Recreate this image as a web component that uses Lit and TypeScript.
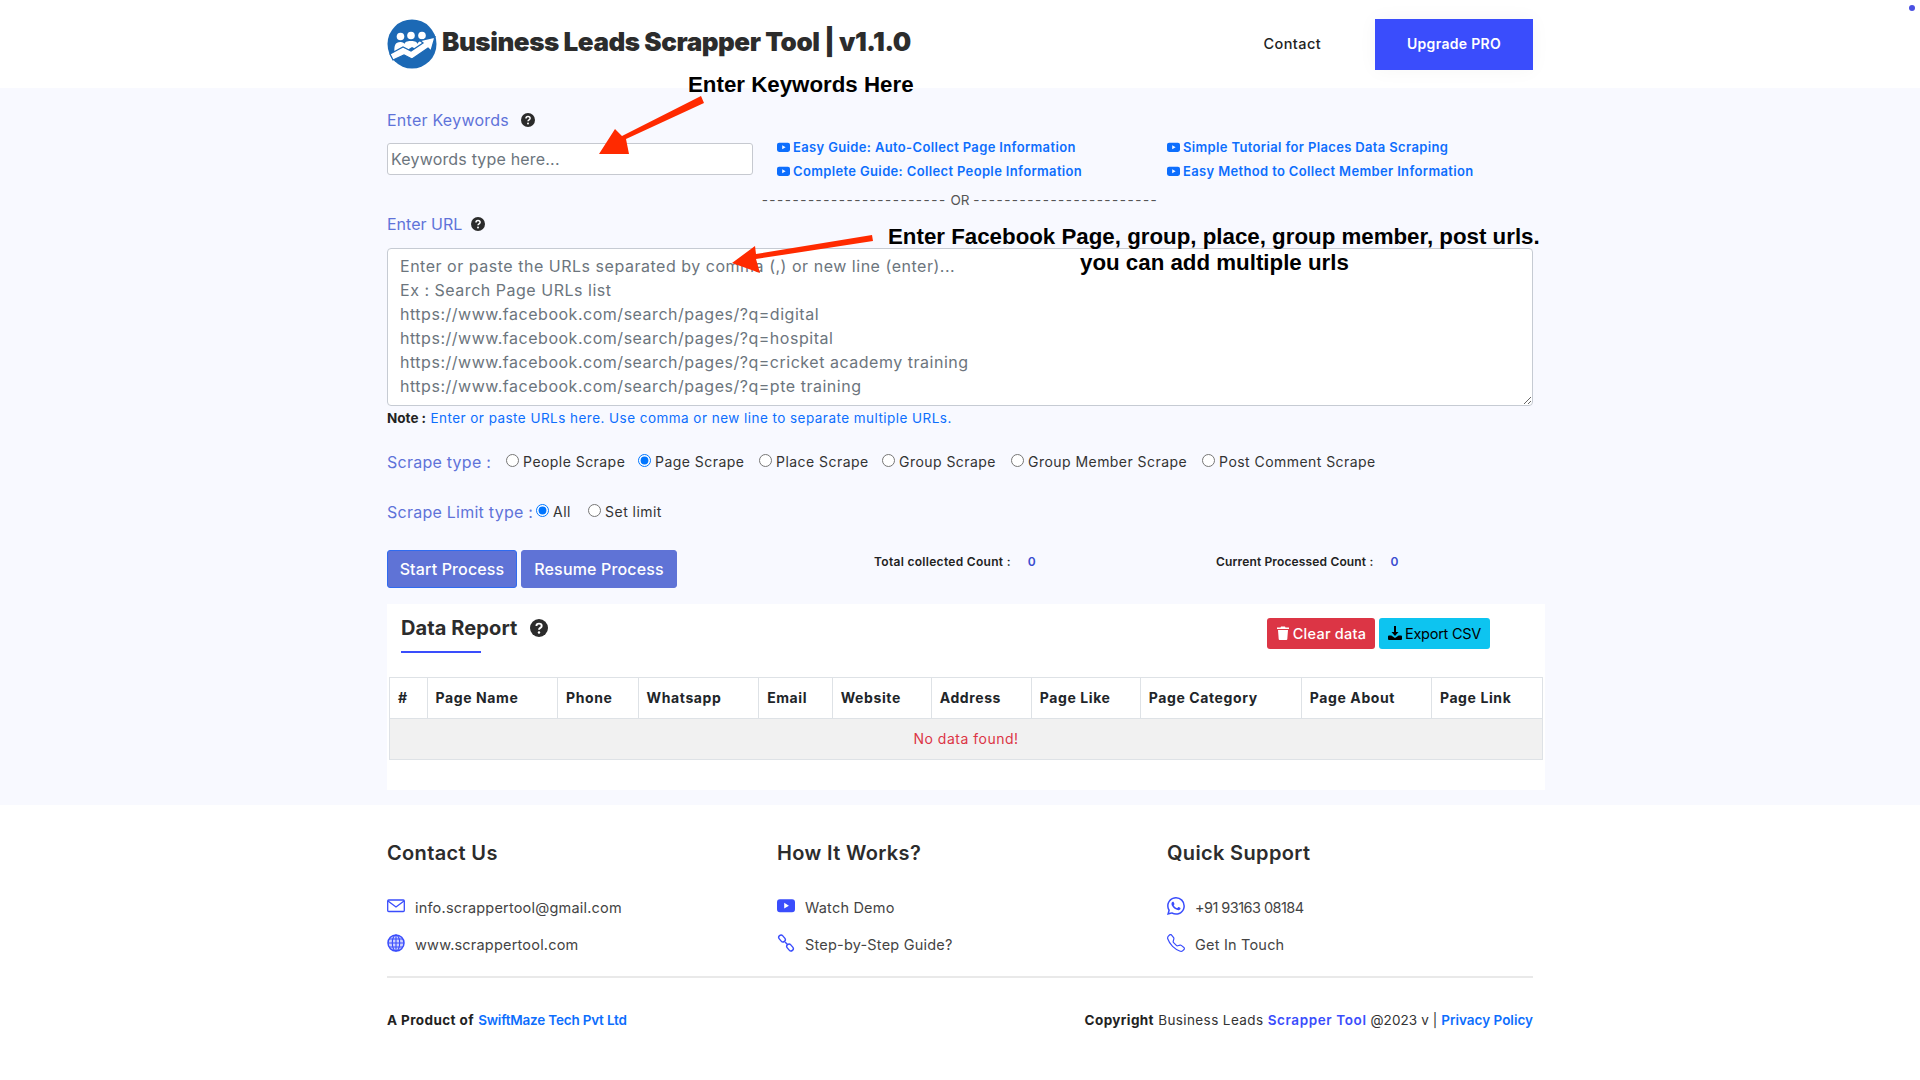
import { LitElement, html, css, svg } from "lit";
import { customElement } from "lit/decorators.js";

const yt = (cls: string) => html`<svg class=${cls} viewBox="0 0 16 16" fill="currentColor"><path fill-rule="evenodd" d="M2.6 2h10.8A2.6 2.6 0 0 1 16 4.6v6.3a2.6 2.6 0 0 1-2.6 2.6H2.6A2.6 2.6 0 0 1 0 10.900V4.600A2.6 2.6 0 0 1 2.600 2zM6.400 5.200v5l4.200-2.500z"/></svg>`;
const help = (size: number) => html`<svg style="width:${size}px;height:${size}px" class="help" viewBox="0 0 16 16"><circle cx="8" cy="8" r="8" fill="#2b2b2b"/><path d="M5.700 6.200C5.700 4.900 6.700 4.100 8 4.100s2.400.8 2.400 2.100c0 1.700-2.400 1.700-2.400 3.300" fill="none" stroke="#fff" stroke-width="1.700"/><circle cx="8" cy="11.900" r="1.100" fill="#fff"/></svg>`;

const columns = [
  ["#", 37.5], ["Page Name", 130.5], ["Phone", 80.5], ["Whatsapp", 120.5], ["Email", 73.5], ["Website", 99],
  ["Address", 100], ["Page Like", 109], ["Page Category", 161], ["Page About", 130], ["Page Link", 111],
] as [string, number][];

const scrapeTypes = ["People Scrape", "Page Scrape", "Place Scrape", "Group Scrape", "Group Member Scrape", "Post Comment Scrape"];
const placeholder = `Enter or paste the URLs separated by comma (,) or new line (enter)...
Ex : Search Page URLs list
https://www.facebook.com/search/pages/?q=digital
https://www.facebook.com/search/pages/?q=hospital
https://www.facebook.com/search/pages/?q=cricket academy training
https://www.facebook.com/search/pages/?q=pte training`;
const dashes = "------------------------";

@customElement("app-root")
export class AppRoot extends LitElement {
  static styles = css`
    :host { display: block; position: relative; height: 1080px; overflow: hidden; background: #fff; font-family: Inter, "Noto Sans", sans-serif; color: #333; }
    * { box-sizing: border-box; }
    a { text-decoration: none; }
    .wrap { width: 1146px; margin: 0 auto; }
    header .wrap { height: 88px; display: flex; align-items: center; }
    .logo { width: 50px; height: 50px; flex: none; }
    .brand { margin: -5px 0 0 5px; font-size: 26px; font-weight: 900; letter-spacing: -0.45px; color: #2c2c2c; white-space: nowrap; }
    .contact { margin-left: auto; margin-right: 54px; font-size: 14.500px; font-weight: 500; color: #222; margin-top: -1px; letter-spacing: .4px; }
    .pro { width: 158px; height: 51px; background: #3a4dfc; color: #fff; font-size: 14px; font-weight: 600; letter-spacing: .3px; padding-bottom: 1px; display: flex; align-items: center; justify-content: center; box-shadow: 0 0 20px rgba(0,0,0,.04); }
    .dot { position: absolute; left: 1909px; top: 5px; width: 6px; height: 6px; border-radius: 50%; background: #4a50e2; }

    main { background: #f8f9ff; height: 717px; padding-top: 20px; }
    .label { font-size: 16px; line-height: 24px; color: #5f73d9; display: flex; align-items: center; gap: 12px; letter-spacing: .25px; }
    .help { flex: none; }
    .top { display: grid; grid-template-columns: 390px 390px 366px; }
    .kw { margin-top: 11px; width: 366px; height: 32px; border: 1px solid #c6c9d0; border-radius: 3px; background: #fff; padding: 0 3px; font: 400 16px Inter, sans-serif; letter-spacing: .18px; display: block; outline: none; }
    .kw::placeholder { color: #6c757d; opacity: 1; }
    .links { margin-top: 29px; display: flex; flex-direction: column; gap: 4px; }
    .links a { height: 20px; display: flex; align-items: center; gap: 3px; font-size: 13px; font-weight: 600; color: #0d6efd; letter-spacing: .35px; white-space: nowrap; }
    .yt { width: 13px; height: 13px; flex: none; }
    .or { margin-top: 9px; height: 20px; line-height: 20px; text-align: center; font-size: 13.500px; color: #555; white-space: nowrap; }
    .or span { letter-spacing: 1.500px; }
    .urllabel { margin-top: 2px; letter-spacing: 0; }
    .label.urllabel { gap: 9px; }
    textarea { display: block; margin-top: 12px; width: 1146px; height: 158px; border: 1px solid #c6cbd3; border-radius: 4px; background: #fff; padding: 5px 12px; font: 400 16px/24px Inter, sans-serif; letter-spacing: .52px; outline: none; overflow: hidden; }
    textarea::placeholder { color: #6c757d; opacity: 1; }
    .note { margin-top: 2px; height: 20px; line-height: 20px; font-size: 13.500px; color: #0d6efd; white-space: nowrap; letter-spacing: .46px; }
    .note b { color: #222; font-weight: 700; letter-spacing: 0; }
    .row { height: 24px; display: flex; align-items: center; white-space: nowrap; }
    .types { margin-top: 22px; }
    .limit { margin-top: 26px; }
    .opt { display: flex; align-items: center; font-size: 14px; color: #333; letter-spacing: .45px; padding-bottom: 2px; }
    .opt input { width: 13px; height: 13px; margin: -1px 4px 0 0; }
    .types .opts { display: grid; grid-template-columns: 132px 121px 123px 129px 191px auto; margin-left: 15px; }
    .limit .opts { display: grid; grid-template-columns: 52px auto; margin-left: 3px; }
    .actions { margin-top: 26px; height: 38px; display: grid; grid-template-columns: 487px 342px auto; }
    .btns { display: flex; gap: 4px; }
    .btn { height: 38px; border-radius: 3px; border: 1px solid #5f73d6; background: #5f73d6; color: #fff; font-size: 16px; font-weight: 500; letter-spacing: .15px; padding-bottom: 1px; display: flex; align-items: center; justify-content: center; }
    .btn.start { width: 130px; border-color: #2f6bf0; }
    .btn.resume { width: 156px; }
    .count { margin-top: 3px; height: 18px; display: flex; font-size: 12px; font-weight: 600; color: #222; line-height: 18px; white-space: nowrap; letter-spacing: .3px; }
    .count.b { letter-spacing: .15px; }
    .count span { color: #3a4dd0; margin-left: 17px; }

    .panel { margin-top: 16px; width: 1158px; height: 186px; background: #fff; }
    .phead { height: 73px; display: flex; padding-left: 14px; }
    .ptitle { display: flex; align-items: flex-start; flex-direction: column; }
    .ptitle h2 { margin: 10px 0 0; font-size: 20px; line-height: 28px; font-weight: 700; color: #2c2c2c; display: flex; align-items: center; gap: 13px; letter-spacing: .1px; }
    .ptitle i { display: block; flex: none; margin-top: 9px; width: 80px; height: 2px; background: #3a4dfc; }
    .pbtns { margin: 14px 55px 0 auto; display: flex; gap: 4px; }
    .small { height: 31px; border-radius: 3px; font-size: 14.500px; padding-bottom: 1px; display: flex; align-items: center; justify-content: center; gap: 3px; }
    .small svg { width: 14px; height: 14px; }
    .clear { width: 108px; background: #dc3545; color: #fff; font-weight: 500; letter-spacing: .25px; }
    .export { width: 111px; background: #0dc4f0; color: #000; letter-spacing: -.25px; }
    table { margin-left: 2px; width: 1154px; table-layout: fixed; border-collapse: collapse; }
    th, td { border: 1px solid #dee2e6; }
    th { height: 41px; text-align: left; padding: 0 8px 1px; font-size: 14px; font-weight: 700; color: #212529; white-space: nowrap; letter-spacing: .6px; }
    td { height: 41px; padding: 0 0 2px; text-align: center; background: #f1f1f1; color: #dc3545; font-size: 14px; letter-spacing: .5px; }

    footer .grid { display: grid; grid-template-columns: 390px 390px 366px; padding-top: 33px; }
    footer h3 { margin: 0 0 27px; height: 30px; line-height: 30px; font-size: 20px; font-weight: 600; color: #2c2c2c; letter-spacing: .35px; }
    .item { height: 24px; display: flex; align-items: center; gap: 10px; font-size: 14.500px; color: #444; margin-bottom: 13px; white-space: nowrap; letter-spacing: .2px; }
    .item.tel { letter-spacing: -.55px; }
    .item svg { width: 18px; height: 18px; flex: none; color: #3a4dfc; margin-top: -3px; }
    hr { margin: 7px 0 0; border: 0; height: 2px; background: #e9e9e9; }
    .bottom { margin-top: 32px; height: 20px; display: flex; justify-content: space-between; align-items: center; font-size: 13.500px; color: #333; white-space: nowrap; letter-spacing: .4px; }
    .bottom b { font-weight: 700; color: #222; }
    .bottom a { font-weight: 600; color: #0d6efd; letter-spacing: 0; }
    .bottom a.swift { letter-spacing: -.2px; }
    .bottom a.indigo { color: #3a4dfc; letter-spacing: .6px; }
    .bottom .year { letter-spacing: .1px; }

    .overlay { position: absolute; left: 0; top: 0; width: 1920px; height: 1080px; pointer-events: none; }
    .note-a { position: absolute; font-family: "Liberation Sans", Arial, sans-serif; font-weight: 700; font-size: 22.300px; line-height: 26px; color: #000; white-space: nowrap; }
  `;

  render() {
    return html`
      <header><div class="wrap">
        <svg class="logo" viewBox="0 0 50 50">
          <circle cx="25" cy="25" r="24.500" fill="#1c69b5"/>
          <g fill="#fff">
            <circle cx="13.500" cy="17.500" r="3.800"/><circle cx="24" cy="16.500" r="3.800"/><circle cx="35" cy="16.500" r="3.800"/>
            <path d="M7.500 33c-.5-6 .5-10 6-10 2.500 0 3.500 1 4 2 .5-2 2-3 6.500-3s6 1 6.500 3c.5-2 2-3 5-3 3.500 0 4.500 1.500 4.500 3l-9 6-6-3-8 5-2-1z"/>
            <path d="M3 35l13-7 8 4 12-8-3-2.500 15-3.500-4 14-3-3-16 11-8-4-11 5z" stroke="#1c69b5" stroke-width="1.300"/>
          </g>
        </svg>
        <div class="brand">Business Leads Scrapper Tool | v1.1.0</div>
        <a class="contact">Contact</a>
        <a class="pro">Upgrade PRO</a>
      </div></header>
      <div class="dot"></div>

      <main><div class="wrap">
        <div class="top">
          <div>
            <div class="label">Enter Keywords ${help(14)}</div>
            <input class="kw" placeholder="Keywords type here..." />
          </div>
          <div class="links">
            <a>${yt("yt")}Easy Guide: Auto-Collect Page Information</a>
            <a>${yt("yt")}Complete Guide: Collect People Information</a>
          </div>
          <div class="links">
            <a>${yt("yt")}Simple Tutorial for Places Data Scraping</a>
            <a>${yt("yt")}Easy Method to Collect Member Information</a>
          </div>
        </div>
        <div class="or"><span>${dashes}</span> OR <span>${dashes}</span></div>
        <div class="label urllabel">Enter URL ${help(14)}</div>
        <textarea placeholder=${placeholder}></textarea>
        <div class="note"><b>Note :</b> Enter or paste URLs here. Use comma or new line to separate multiple URLs.</div>
        <div class="row types">
          <div class="label">Scrape type :</div>
          <div class="opts">
            ${scrapeTypes.map((t) => html`<label class="opt"><input type="radio" name="st" ?checked=${t === "Page Scrape"} />${t}</label>`)}
          </div>
        </div>
        <div class="row limit">
          <div class="label">Scrape Limit type :</div>
          <div class="opts">
            <label class="opt"><input type="radio" name="lt" checked />All</label>
            <label class="opt"><input type="radio" name="lt" />Set limit</label>
          </div>
        </div>
        <div class="actions">
          <div class="btns"><div class="btn start">Start Process</div><div class="btn resume">Resume Process</div></div>
          <div class="count a">Total collected Count :<span>0</span></div>
          <div class="count b">Current Processed Count :<span>0</span></div>
        </div>
        <div class="panel">
          <div class="phead">
            <div class="ptitle"><h2>Data Report ${help(18)}</h2><i></i></div>
            <div class="pbtns">
              <div class="small clear"><svg viewBox="0 0 14 14" fill="currentColor"><path d="M5 .5h4l.5 1H13v1.500H1V1.500h3.500zM2 4h10l-.7 9a1 1 0 0 1-1 1H3.700a1 1 0 0 1-1-1z"/></svg>Clear data</div>
              <div class="small export"><svg viewBox="0 0 14 14" fill="currentColor"><path d="M6 0h2v6h2.500L7 10 3.500 6H6z"/><path d="M0 10.500a1 1 0 0 1 1-1h2.300L7 12l3.700-2.500H13a1 1 0 0 1 1 1V13a1 1 0 0 1-1 1H1a1 1 0 0 1-1-1z"/></svg>Export CSV</div>
            </div>
          </div>
          <table>
            <colgroup>${columns.map(([, w]) => html`<col style="width:${w}px" />`)}</colgroup>
            <thead><tr>${columns.map(([n]) => html`<th>${n}</th>`)}</tr></thead>
            <tbody><tr><td colspan="11">No data found!</td></tr></tbody>
          </table>
        </div>
      </div></main>

      <footer><div class="wrap">
        <div class="grid">
          <div>
            <h3>Contact Us</h3>
            <div class="item"><svg viewBox="0 0 18 18" fill="none" stroke="currentColor" stroke-width="1.300"><rect x=".7" y="3" width="16.600" height="11.500" rx="1"/><path d="M1 4l8 6 8-6"/></svg>info.scrappertool@gmail.com</div>
            <div class="item"><svg viewBox="0 0 18 18" fill="none" stroke="currentColor" stroke-width="1.100"><circle cx="9" cy="9" r="8" fill="currentColor" fill-opacity=".25" stroke-width="1.500"/><ellipse cx="9" cy="9" rx="3.700" ry="8"/><path d="M9 1v16M1 9h16M2 5h14M2 13h14"/></svg>www.scrappertool.com</div>
          </div>
          <div>
            <h3>How It Works?</h3>
            <div class="item">${yt("")}Watch Demo</div>
            <div class="item"><svg viewBox="0 0 18 18" fill="none" stroke="currentColor" stroke-width="1.400"><rect x="-3.800" y="-2.300" width="7.600" height="4.600" rx="2.300" transform="translate(5 4.500) rotate(50)"/><rect x="-3.800" y="-2.300" width="7.600" height="4.600" rx="2.300" transform="translate(13 13.500) rotate(50)"/><path d="M8 8l2.500 2.500"/></svg>Step-by-Step Guide?</div>
          </div>
          <div>
            <h3>Quick Support</h3>
            <div class="item tel"><svg viewBox="0 0 16 16" fill="currentColor"><path d="M13.601 2.326A7.854 7.854 0 0 0 7.994 0C3.627 0 .068 3.558.064 7.926c0 1.399.366 2.76 1.057 3.965L0 16l4.204-1.102a7.933 7.933 0 0 0 3.79.965h.004c4.368 0 7.926-3.558 7.93-7.93A7.898 7.898 0 0 0 13.6 2.326zM7.994 14.521a6.573 6.573 0 0 1-3.356-.92l-.24-.144-2.494.654.666-2.433-.156-.251a6.56 6.56 0 0 1-1.007-3.505c0-3.626 2.957-6.584 6.591-6.584a6.56 6.56 0 0 1 4.66 1.931 6.557 6.557 0 0 1 1.928 4.66c-.004 3.639-2.961 6.592-6.592 6.592zm3.615-4.934c-.197-.099-1.17-.578-1.353-.646-.182-.065-.315-.099-.445.099-.133.197-.513.646-.627.775-.114.133-.232.148-.43.05-.197-.1-.836-.308-1.592-.985-.59-.525-.985-1.175-1.103-1.372-.114-.198-.011-.304.088-.403.087-.088.197-.232.296-.346.1-.114.133-.198.198-.33.065-.134.034-.248-.015-.347-.05-.099-.445-1.076-.612-1.47-.16-.389-.323-.335-.445-.34-.114-.007-.247-.007-.38-.007a.729.729 0 0 0-.529.247c-.182.198-.691.677-.691 1.654 0 .977.71 1.916.81 2.049.098.133 1.394 2.132 3.383 2.992.47.205.84.326 1.129.418.475.152.904.129 1.246.08.38-.058 1.171-.48 1.338-.943.164-.464.164-.86.114-.943-.049-.084-.182-.133-.38-.232z"/></svg>+91 93163 08184</div>
            <div class="item"><svg viewBox="0 0 16 16" fill="currentColor"><path d="M3.654 1.328a.678.678 0 0 0-1.015-.063L1.605 2.3c-.483.484-.661 1.169-.45 1.77a17.568 17.568 0 0 0 4.168 6.608 17.569 17.569 0 0 0 6.608 4.168c.601.211 1.286.033 1.77-.45l1.034-1.034a.678.678 0 0 0-.063-1.015l-2.307-1.794a.678.678 0 0 0-.58-.122l-2.19.547a1.745 1.745 0 0 1-1.657-.459L5.482 8.062a1.745 1.745 0 0 1-.46-1.657l.548-2.19a.678.678 0 0 0-.122-.58L3.654 1.328zM1.884.511a1.745 1.745 0 0 1 2.612.163L6.29 2.98c.329.423.445.974.315 1.494l-.547 2.19a.678.678 0 0 0 .178.643l2.457 2.457a.678.678 0 0 0 .644.178l2.189-.547a1.745 1.745 0 0 1 1.494.315l2.306 1.794c.829.645.905 1.87.163 2.611l-1.034 1.034c-.74.74-1.846 1.065-2.877.702a18.634 18.634 0 0 1-7.01-4.42 18.634 18.634 0 0 1-4.42-7.009c-.362-1.03-.037-2.137.703-2.877L1.885.511z"/></svg>Get In Touch</div>
          </div>
        </div>
        <hr />
        <div class="bottom">
          <div><b>A Product of</b> <a class="swift">SwiftMaze Tech Pvt Ltd</a></div>
          <div><b>Copyright</b> Business Leads <a class="indigo">Scrapper Tool</a><span class="year"> @2023 v | </span><a>Privacy Policy</a></div>
        </div>
      </div></footer>

      <div class="overlay">
        <svg width="1920" height="1080" style="position:absolute;left:0;top:0">
          ${svg`<path d="M701 96 L704 103 L626 139 L629 154 L599 154 L615 129 L622 136Z" fill="#ff2a00"/>
          <path d="M872 235 L873 241 L756 259 L760 273 L732 263 L755 246 L756 254Z" fill="#ff2a00"/>`}
        </svg>
        <div class="note-a" style="left:688px;top:72px">Enter Keywords Here</div>
        <div class="note-a" style="left:888px;top:224px">Enter Facebook Page, group, place, group member, post urls.</div>
        <div class="note-a" style="left:1080px;top:250px">you can add multiple urls</div>
      </div>
    `;
  }
}
